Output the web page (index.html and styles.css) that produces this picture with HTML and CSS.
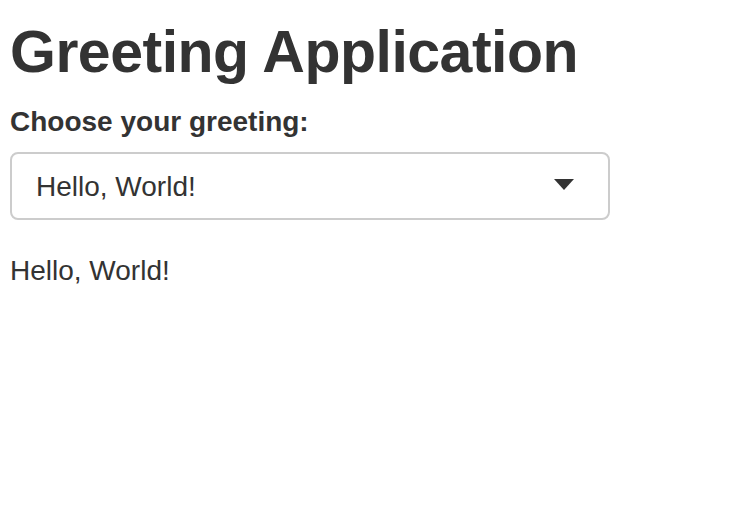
FILE: index.html
```html
<!DOCTYPE html>
<html>
<head>
<meta charset="utf-8">
<link rel="stylesheet" href="styles.css">
</head>
<body>
<div class="page">
  <h1 class="title">Greeting Application</h1>
  <div class="form-group">
    <label class="label">Choose your greeting:</label>
    <div class="select">
      <span class="select-value">Hello, World!</span>
      <span class="caret"></span>
    </div>
  </div>
  <div class="output">Hello, World!</div>
</div>
</body>
</html>
```
FILE: styles.css
```css
html, body {
  margin: 0;
  padding: 0;
  background: #fff;
}
body {
  font-family: "Liberation Sans", Arial, Helvetica, sans-serif;
  color: #333;
  font-size: 28px;
  line-height: 40px;
}
.page {
  padding: 19px 10px 0;
}
.title {
  font-size: 59px;
  font-weight: bold;
  letter-spacing: -0.5px;
  line-height: 66px;
  margin: 0 0 17px;
  color: #333;
}
.form-group {
  margin-bottom: 31px;
}
.label {
  display: block;
  font-weight: bold;
  margin-bottom: 10px;
}
.select {
  position: relative;
  width: 600px;
  box-sizing: border-box;
  border: 2px solid #ccc;
  border-radius: 8px;
  padding: 13px 48px 11px 24px;
  height: 68px;
}
.select-value {
  display: block;
}
.caret {
  position: absolute;
  right: 34px;
  top: 25px;
  width: 0;
  height: 0;
  border-style: solid;
  border-width: 11px 10px 0 10px;
  border-color: #333 transparent transparent transparent;
}
.output {
  margin: 0;
}
```
